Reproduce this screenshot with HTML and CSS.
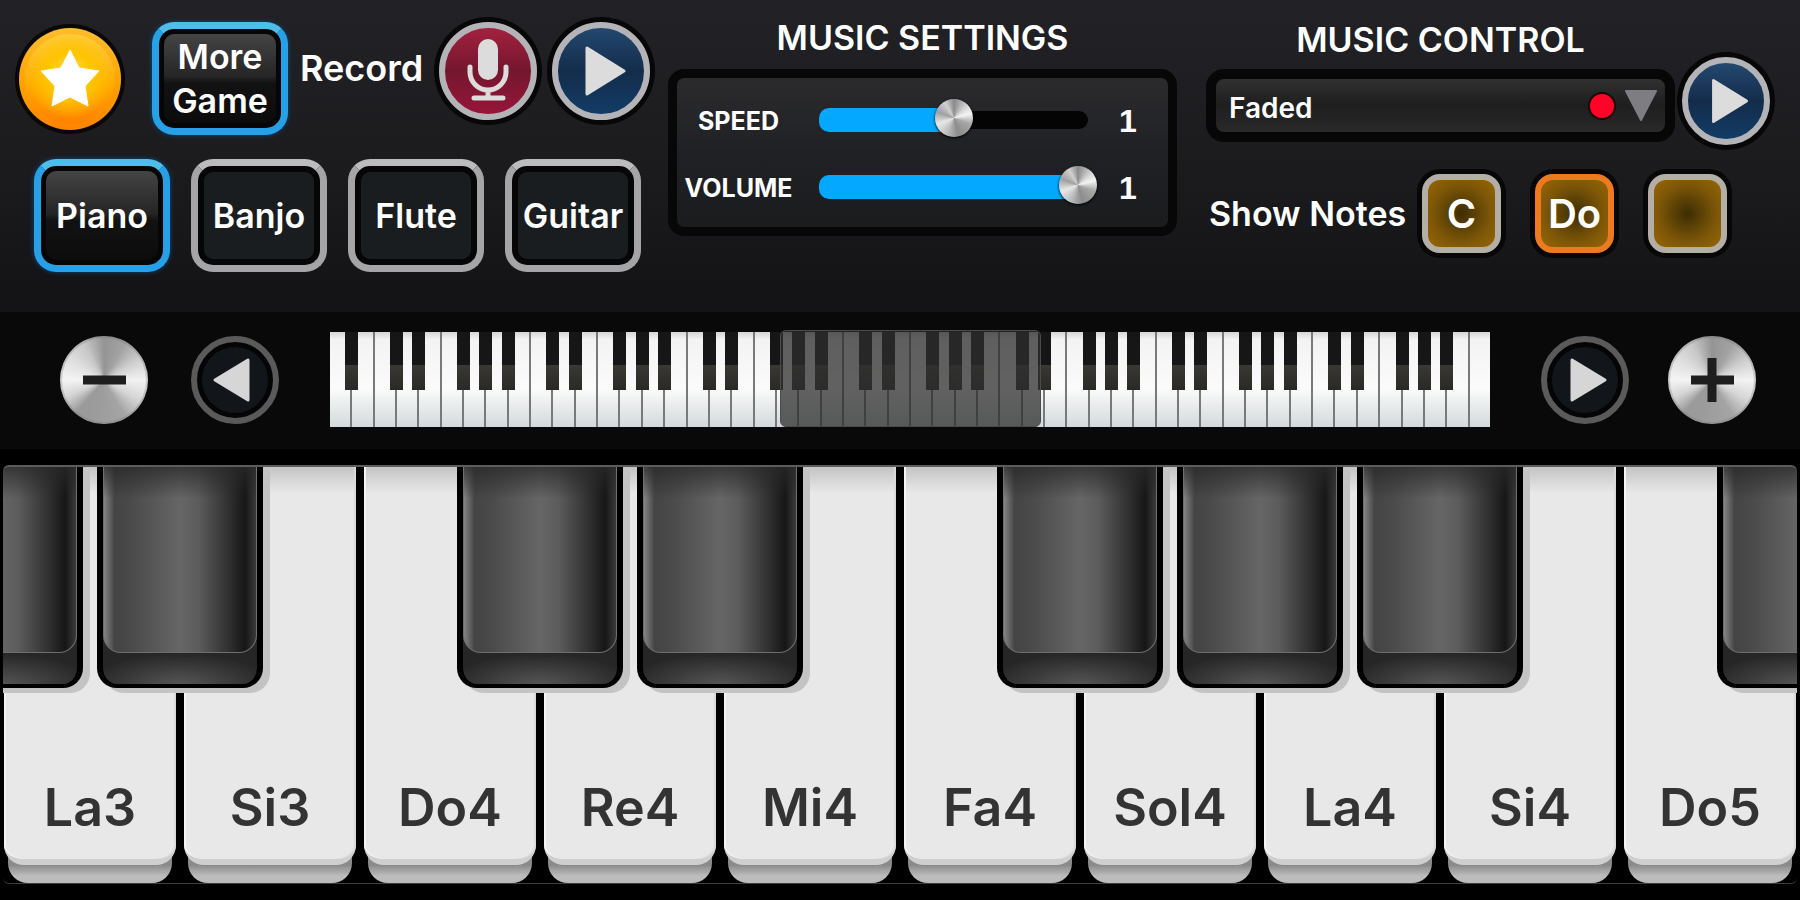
FILE: index.html
```html
<!DOCTYPE html>
<html lang="en">
<head>
    <meta charset="UTF-8">
    <meta name="viewport" content="width=device-width, initial-scale=1.0">
    <title>Piano</title>
    <link rel="stylesheet" href="styles.css">
</head>
<body>

    <header class="panel">
        <section class="instruments">
            <div class="top-row">
                <button class="star" aria-label="Favourites">
                    <svg viewBox="0 0 102 102"><path d="M51 22l9 18 20 3-14 15 3 20-18-9-18 9 3-20-14-15 20-3z" fill="#fff" stroke="#fff" stroke-width="1" stroke-linejoin="round"/></svg>
                </button>
                <button class="tile active">More Game</button>
                <div class="record">
                    <span class="record-label">Record</span>
                    <button class="round red" aria-label="Record">
                        <svg viewBox="0 0 98 98" fill="none" stroke="#dcdcdc" stroke-width="5" stroke-linecap="round">
                            <rect x="39" y="17" width="20" height="41" rx="10" fill="#dcdcdc" stroke="none"/>
                            <path d="M31 45v5a18 18 0 0 0 36 0v-5M49 68v8M35 76h29"/>
                        </svg>
                    </button>
                    <button class="round blue" aria-label="Play recording">
                        <svg viewBox="0 0 98 98"><path d="M35 26v46l37-23z" fill="#dcdcdc" stroke="#dcdcdc" stroke-width="3" stroke-linejoin="round"/></svg>
                    </button>
                </div>
            </div>
            <div class="tiles">
                <button class="tile active">Piano</button>
                <button class="tile">Banjo</button>
                <button class="tile">Flute</button>
                <button class="tile">Guitar</button>
            </div>
        </section>

        <section class="settings">
            <h2>MUSIC SETTINGS</h2>
            <div class="settings-box">
                <div class="setting">
                    <label for="speed">SPEED</label>
                    <div class="slider">
                        <span class="fill" style="width: 50%"></span>
                        <input type="range" id="speed" min="0" max="2" step="0.1" value="1">
                    </div>
                    <output for="speed">1</output>
                </div>
                <div class="setting">
                    <label for="volume">VOLUME</label>
                    <div class="slider">
                        <span class="fill" style="width: 100%"></span>
                        <input type="range" id="volume" min="0" max="1" step="0.1" value="1">
                    </div>
                    <output for="volume">1</output>
                </div>
            </div>
        </section>

        <section class="control">
            <div class="song-row">
                <div class="song">
                    <h2><label for="song">MUSIC CONTROL</label></h2>
                    <div class="select-box">
                        <select id="song">
                            <option>Faded</option>
                        </select>
                        <svg class="select-marks" viewBox="0 0 76 40">
                            <circle cx="17" cy="20" r="14" fill="#1c0508"/>
                            <circle cx="17" cy="20" r="12" fill="#ff0328"/>
                            <path d="M41 5h30L56 34z" fill="#7e7e82" stroke="#7e7e82" stroke-width="2" stroke-linejoin="round"/>
                        </svg>
                    </div>
                </div>
                <button class="round blue small" aria-label="Play song">
                    <svg viewBox="0 0 98 98"><path d="M35 26v46l37-23z" fill="#dcdcdc" stroke="#dcdcdc" stroke-width="3" stroke-linejoin="round"/></svg>
                </button>
            </div>
            <div class="notes-row">
                <span class="notes-label">Show Notes</span>
                <button class="note">C</button>
                <button class="note selected">Do</button>
                <button class="note" aria-label="Hide notes"></button>
            </div>
        </section>
    </header>

    <nav class="range-bar">
        <button class="metal" aria-label="Zoom out">
            <svg viewBox="0 0 88 88"><path d="M23 44h43" stroke="#1e1e1e" stroke-width="9"/></svg>
        </button>
        <button class="arrow" aria-label="Scroll left">
            <svg viewBox="0 0 88 88"><path d="M57 24v40L24 44z" fill="#d6d6d6" stroke="#d6d6d6" stroke-width="3" stroke-linejoin="round"/></svg>
        </button>
        <div class="overview">
            <div class="mini-keys" id="mini"></div>
            <div class="window"></div>
        </div>
        <button class="arrow" aria-label="Scroll right">
            <svg viewBox="0 0 88 88"><path d="M31 24v40l33-20z" fill="#d6d6d6" stroke="#d6d6d6" stroke-width="3" stroke-linejoin="round"/></svg>
        </button>
        <button class="metal plus" aria-label="Zoom in">
            <svg viewBox="0 0 88 88"><path d="M23 44h43M44 22v44" stroke="#1e1e1e" stroke-width="9"/></svg>
        </button>
    </nav>

    <main class="keyboard" id="keyboard"></main>

    <script>
        const mini = document.getElementById('mini');
        const keyboard = document.getElementById('keyboard');

        // white keys followed by a black one, counted from A
        const sharps = [true, false, true, true, false, true, true];

        for (let i = 0; i < 52; i++) {
            const key = document.createElement('div');
            key.className = sharps[i % 7] && i < 51 ? 'mini-key sharp' : 'mini-key';
            mini.appendChild(key);
        }

        const notes = ['La3', 'Si3', 'Do4', 'Re4', 'Mi4', 'Fa4', 'Sol4', 'La4', 'Si4', 'Do5'];

        notes.forEach((note, i) => {
            const slot = document.createElement('div');
            slot.className = 'slot';
            slot.innerHTML = `<button class="key"><span class="face">${note}</span><span class="lip"></span></button>`;
            if (i === 0) {
                slot.innerHTML += '<button class="black before" aria-label="black key"><span></span></button>';
            }
            if (sharps[i % 7]) {
                slot.innerHTML += '<button class="black" aria-label="black key"><span></span></button>';
            }
            keyboard.appendChild(slot);
        });

        document.querySelectorAll('input[type=range]').forEach(input => {
            input.addEventListener('input', () => {
                input.previousElementSibling.style.width = input.value / input.max * 100 + '%';
                input.parentElement.nextElementSibling.textContent = input.value;
            });
        });
    </script>
</body>
</html>
```
FILE: styles.css
```css
* {
    box-sizing: border-box;
}
body {
    margin: 0;
    min-height: 100vh;
    display: flex;
    flex-direction: column;
    background: #000;
    color: #fff;
    font-family: "Inter", sans-serif;
    font-size: 34px;
    font-weight: 600;
    overflow-x: hidden;
}
button {
    padding: 0;
    border: none;
    background: none;
    color: inherit;
    font: inherit;
    cursor: pointer;
    flex: none;
}
svg {
    display: block;
    width: 100%;
}
h2 {
    margin: 0;
    font-size: 34px;
    font-weight: 600;
    line-height: 44px;
    text-align: center;
}

/* top panel */
.panel {
    display: grid;
    grid-template-columns: 668fr 538fr 594fr;
    height: 312px;
    background: linear-gradient(#222226, #1c1c1f 50%, #131315);
}
.top-row {
    display: flex;
    align-items: center;
    padding: 22px 0 0 19px;
}
.star {
    width: 102px;
    height: 102px;
    margin-right: 31px;
    border-radius: 50%;
    background: radial-gradient(circle at 50% 46%, #ffdf50 0, #ffc400 30%, transparent 58%), linear-gradient(#ffd24a, #ffab00 55%, #ff7a00);
    box-shadow: 0 0 0 4px #0a0806, inset 0 0 0 6px rgba(255, 150, 0, 0.35);
}
.tile {
    width: 136px;
    height: 113px;
    border: 7px solid #a5a5a7;
    border-top-color: #bcbcbf;
    border-radius: 22px;
    background: #1a1d1f;
    box-shadow: inset 0 0 0 6px #060607;
    line-height: 44px;
    display: flex;
    align-items: center;
    justify-content: center;
}
.tile.active {
    border-color: #27a0e8;
    border-top-color: #4fbdea;
    background: linear-gradient(#484848, #252525 48%, #121212 55%, #0b0b0b);
    box-shadow: inset 0 0 0 5px #060607, 0 0 5px #0b4a7c;
}
.record {
    display: flex;
    align-items: center;
    align-self: flex-start;
    margin-left: 12px;
}
.record-label {
    width: 139px;
    padding-bottom: 6px;
    font-size: 36px;
}
.round {
    width: 98px;
    height: 98px;
    border: 6px solid #b4b4b8;
    border-radius: 50%;
    box-shadow: 0 0 0 5px #070708;
}
.round svg {
    width: 98px;
    margin: -6px;
}
.round.red {
    margin-right: 15px;
    background: linear-gradient(#a3213f, #74172e 50%, #971539);
}
.round.blue {
    background: linear-gradient(#23486f, #142c4b 50%, #123c66);
}
.round.small {
    width: 88px;
    height: 88px;
}
.round.small svg {
    width: 88px;
}
.tiles {
    display: flex;
    gap: 21px;
    padding: 24px 0 0 34px;
}

/* music settings */
.settings {
    padding: 16px 29px 0 0;
}
.settings-box {
    margin-top: 9px;
    padding: 8px 0 7px;
    border: 9px solid #070708;
    border-radius: 16px;
    background: linear-gradient(#2b2b2e, #202124 50%, #1b1c1e);
}
.setting {
    display: grid;
    grid-template-columns: 123px 1fr 80px;
    align-items: center;
    height: 67px;
    text-align: center;
}
.setting label {
    padding-top: 3px;
    font-size: 25px;
    font-weight: 700;
}
.setting output {
    padding-top: 3px;
    font-family: "Liberation Sans", sans-serif;
    font-size: 32px;
    font-weight: 700;
}
.slider {
    display: grid;
    align-items: center;
    align-content: center;
    height: 18px;
    margin-left: 19px;
    border-radius: 9px;
    background: #040404;
}
.slider > * {
    grid-area: 1 / 1;
}
.fill {
    height: 24px;
    border-radius: 10px;
    background: #04a9ff;
}
.slider input {
    width: calc(100% + 18px);
    height: 38px;
    margin: -12px -9px -8px;
    appearance: none;
    background: none;
}
.slider input::-webkit-slider-thumb {
    appearance: none;
    width: 38px;
    height: 38px;
    border-radius: 50%;
    background: conic-gradient(#8a8a8a, #d8d8d8 50deg, #f4f4f4 75deg, #a8a8a8 110deg, #8c8c8c 165deg, #c2c2c2 210deg, #e8e8e8 250deg, #a0a0a0 290deg, #d0d0d0 330deg, #8a8a8a);
    box-shadow: 0 1px 3px #000;
}

/* music control */
.control {
    padding: 18px 30px 0 0;
}
.song-row {
    display: flex;
    align-items: flex-end;
    gap: 7px;
}
.song {
    flex: 1;
    padding-bottom: 3px;
}
.select-box {
    position: relative;
    margin-top: 7px;
}
.select-box select {
    display: block;
    width: 100%;
    height: 73px;
    padding: 4px 13px 0;
    appearance: none;
    border: 10px solid #070708;
    border-radius: 18px;
    background: linear-gradient(#303031, #1e1e1f 50%, #2a2a2b);
    color: #fff;
    font: inherit;
    font-size: 28px;
    font-weight: 600;
}
.select-marks {
    position: absolute;
    right: 14px;
    top: 17px;
    width: 76px;
    pointer-events: none;
}
.notes-row {
    display: flex;
    align-items: center;
    padding: 29px 0 0 3px;
}
.notes-label {
    flex: 1;
    white-space: nowrap;
}
.note {
    width: 79px;
    height: 79px;
    margin-right: 34px;
    border: 6px solid #b3aea6;
    border-radius: 18px;
    background: radial-gradient(#3c2d04, #7c5607 60%, #9a6606);
    box-shadow: 0 0 0 5px #070708;
    font-size: 40px;
    font-weight: 600;
    line-height: 60px;
}
.note:last-child {
    margin-right: 43px;
}
.note.selected {
    border-color: #ee7a20;
}

/* overview of the whole keyboard */
.range-bar {
    display: flex;
    align-items: center;
    height: 137px;
    padding: 0 44px 2px 60px;
    background: #090909;
}
.metal,
.arrow {
    width: 88px;
    height: 88px;
    border-radius: 50%;
}
.metal {
    background: conic-gradient(#949494, #a2a2a2 30deg, #cfcfcf 60deg, #f2f2f2 90deg, #d6d6d6 120deg, #a4a4a4 150deg, #9c9c9c 190deg, #9a9a9a 220deg, #d4d4d4 245deg, #f4f4f4 270deg, #e0e0e0 300deg, #c8c8c8 330deg, #949494);
    box-shadow: inset 0 0 0 2px rgba(120, 120, 120, 0.3);
    margin-right: 43px;
}
.metal.plus {
    margin: 0 0 0 39px;
}
.arrow {
    border: 6px solid #5a5a5b;
    background: #12151a;
    box-shadow: inset 0 0 0 5px #050506;
}
.arrow svg {
    width: 88px;
    margin: -6px;
}
.overview {
    position: relative;
    flex: 1;
    margin: 0 51px;
}
.mini-keys {
    display: flex;
    height: 95px;
}
.mini-key {
    position: relative;
    flex: 1;
    border-right: 2px solid #77797a;
    background: linear-gradient(#d5d5d5, #f3f3f3 8%, #fbfbfb 60%, #d3d9da);
}
.mini-key:last-child {
    border-right: none;
}
.mini-key.sharp::after {
    content: "";
    position: absolute;
    z-index: 1;
    top: 0;
    right: -8px;
    width: 13px;
    height: 58px;
    background: linear-gradient(#161616 56%, #3a3834 57%, #2a2927);
}
.window {
    position: absolute;
    z-index: 2;
    top: -2px;
    bottom: 0;
    left: 38.8%;
    width: 22.5%;
    border: 1px solid #4b4b4b;
    border-radius: 6px;
    background: rgba(45, 45, 46, 0.75);
}

/* playable keys */
.keyboard {
    display: flex;
    gap: 8px;
    flex: 1;
    min-height: 419px;
    margin: 16px 3px;
    padding: 0 1px;
    border-top: 2px solid #5c5c5c;
    border-bottom: 1px solid #3c3c3c;
    border-radius: 6px;
    overflow: hidden;
}
.slot {
    position: relative;
    flex: 1;
    display: flex;
}
.key {
    flex: 1;
    display: flex;
    flex-direction: column;
    color: #333;
    font-size: 52px;
}
.face {
    position: relative;
    z-index: 1;
    flex: 1;
    display: flex;
    align-items: flex-end;
    justify-content: center;
    padding-bottom: 20px;
    border-bottom: 6px solid #cfcfcf;
    border-radius: 0 0 20px 20px;
    background: linear-gradient(#c4c4c4, #e8e8e8 26px);
    box-shadow: inset 2px 0 #f5f5f5, inset -2px 0 #dadada;
}
.lip {
    height: 36px;
    margin: -18px 4px 0;
    border-radius: 0 0 20px 20px;
    background: linear-gradient(#8a8a8a 50%, #bcbcbc 80%);
}
.black {
    position: absolute;
    z-index: 2;
    top: -2px;
    right: -87px;
    width: 166px;
    height: 223px;
    padding-bottom: 31px;
    border: solid #000;
    border-width: 0 6px 4px;
    border-radius: 0 0 20px 20px;
    background: radial-gradient(60% 14% at 50% 100%, #555, transparent), #262626;
    box-shadow: 7px 5px #c4c4c4;
}
.black.before {
    right: auto;
    left: -87px;
}
.black span {
    display: block;
    height: 100%;
    border: 1px solid #6e6e6e;
    border-top: none;
    border-radius: 0 0 18px 18px;
    background: linear-gradient(rgba(40, 40, 40, 0.8), transparent 18%), linear-gradient(90deg, #858585, #444 7%, #4a4a4a 18%, #666 50%, #5c5c5c 62%, #303030 82%, #161616 93%, #3a3a3a);
}
```
